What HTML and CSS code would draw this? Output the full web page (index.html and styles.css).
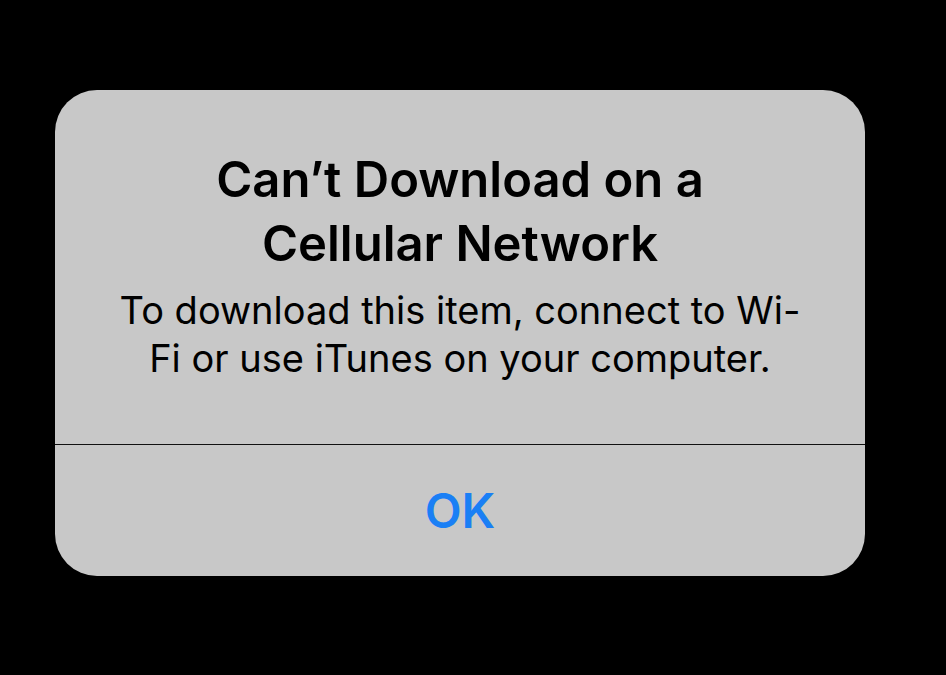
FILE: index.html
```html
<!DOCTYPE html>
<html lang="en">
<head>
    <meta charset="UTF-8">
    <title>Alert</title>
    <link rel="stylesheet" href="styles.css">
</head>
<body>
    <div class="alert">
        <div class="alert-body">
            <h1 class="alert-title">Can’t Download on a<br>Cellular Network</h1>
            <p class="alert-message">To download this item, connect to Wi-<br>Fi or use iTunes on your computer.</p>
        </div>
        <div class="alert-actions">
            <button class="alert-button">OK</button>
        </div>
    </div>
</body>
</html>
```

FILE: styles.css
```css
html, body {
    height: 100%;
}
body {
    margin: 0;
    padding: 90px 0 0 55px;
    box-sizing: border-box;
    background: #000;
    font-family: Inter, "Noto Sans", sans-serif;
}
.alert {
    width: 810px;
    height: 486px;
    background: #c8c8c8;
    border-radius: 42px;
    display: flex;
    flex-direction: column;
    overflow: hidden;
}
.alert-body {
    padding: 58px 10px 0;
    height: 355px;
    box-sizing: border-box;
    text-align: center;
    border-bottom: 1px solid #111;
}
.alert-title {
    margin: 0;
    font-size: 49px;
    line-height: 64px;
    font-weight: 600;
    color: #000;
}
.alert-message {
    margin: 10px 0 0;
    font-size: 38px;
    line-height: 48px;
    color: #000;
}
.alert-actions {
    flex: 1;
    display: flex;
    align-items: center;
    justify-content: center;
}
.alert-button {
    border: 0;
    background: none;
    font-family: inherit;
    font-size: 48px;
    font-weight: 600;
    color: #1a7ff5;
    padding: 0;
}
```
